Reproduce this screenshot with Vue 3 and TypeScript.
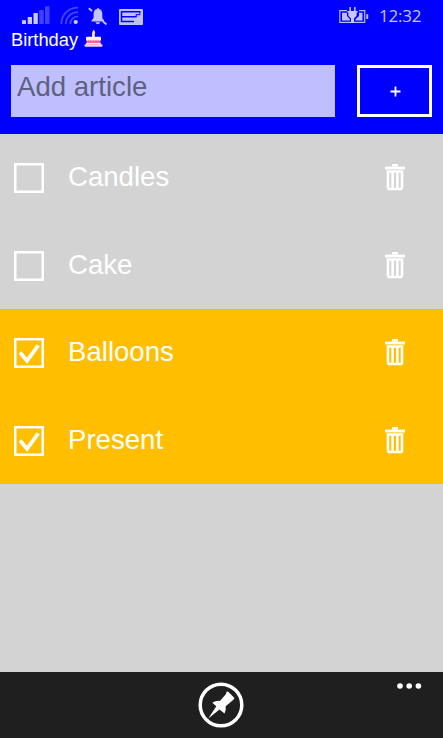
<script setup lang="ts">
import { ref } from 'vue'

interface Article {
  id: number
  name: string
  done: boolean
}

const articles = ref<Article[]>([
  { id: 1, name: 'Candles', done: false },
  { id: 2, name: 'Cake', done: false },
  { id: 3, name: 'Balloons', done: true },
  { id: 4, name: 'Present', done: true },
])
const draft = ref('')
let nextId = 5

function add(): void {
  const name = draft.value.trim()
  if (!name) return
  articles.value.push({ id: nextId++, name, done: false })
  draft.value = ''
}

function remove(id: number): void {
  articles.value = articles.value.filter((a) => a.id !== id)
}
</script>

<template>
  <div class="phone">
    <header class="header">
      <div class="status">
        <svg class="signal" width="30" height="20" viewBox="0 0 30 20">
          <g fill="#c8c8ff">
            <rect x="1" y="15.2" width="4" height="3.8" />
            <rect x="6.7" y="12" width="4.3" height="7" />
            <rect x="12.5" y="8" width="4.3" height="11" />
          </g>
          <g fill="#4040ff">
            <rect x="18.2" y="5" width="4.5" height="14" />
            <rect x="24" y="1.3" width="4.5" height="17.7" />
          </g>
        </svg>
        <svg class="wifi" width="20" height="20" viewBox="0 0 20 20">
          <g fill="none" stroke="#4848ff" stroke-width="1.7">
            <path d="M1.3 19C1.3 9.7 8.5 2.7 18 2.7" />
            <path d="M5.8 19C5.8 12.3 11 7.1 18 7.1" />
            <path d="M10.3 19C10.3 14.7 13.5 11.5 18 11.5" />
          </g>
          <circle cx="15.7" cy="17" r="2.1" fill="#d0d0ff" />
        </svg>
        <svg class="bell" width="20" height="20" viewBox="0 0 20 20">
          <path fill="#c4c4ff" d="M9 3q0-1 1-1t1 1q3.300.8 3.300 5v3.300q0 1.700 1.700 3v1.200H3.600v-1.200q2-1.300 2-3V8Q5.600 3.800 9 3zM7.500 16.300h4.600q-.5 2-2.300 2t-2.300-2z" />
          <path stroke="#c4c4ff" stroke-width="1.800" d="M.8 2.300l3.200 2.700M14.800 15.300l3.700 3.200" />
        </svg>
        <svg class="note" width="24" height="16" viewBox="0 0 24 16">
          <rect width="24" height="16" rx="1" fill="#c0c0ff" />
          <path stroke="#0000ff" stroke-width="1.500" fill="none" d="M2 2.800H21.500M2.500 2.800V13M2.500 7.700H17.500M2.500 12.600H15" />
          <path stroke="#2020ff" stroke-width="1.200" fill="none" d="M20.800 3V5.700H17.300V8" />
        </svg>
        <svg class="battery" width="30" height="18" viewBox="0 0 30 18">
          <g fill="none" stroke="#b8b8ff" stroke-width="1.200">
            <path d="M8 4.600H.8V16.400H12M20 4.600H25.700V16.400H15" />
          </g>
          <path fill="#bcbcff" d="M3 6.800H8V10l3 3.200v1.200H3zM23.500 6.800H20V10l-3.500 3.200v1.200h7zM27.300 8.300H29.200V13H27.300z" />
          <path fill="#c8c8ff" d="M10.400 1h1.500v4h3.200V1h1.500v4h2v1.500h-1v3.200l-2.600 2.700V17h-3v-4.600L9.400 9.700V6.500h-1V5h2z" />
        </svg>
        <span class="clock">12:32</span>
      </div>
      <h1 class="title">
        <span>Birthday</span>
        <svg width="20" height="20" viewBox="0 0 20 20">
          <rect x="0.500" y="15.300" width="18" height="2.500" rx="1" fill="#e8dad8" />
          <rect x="2.500" y="9" width="14" height="7" rx="1" fill="#ff5ca8" />
          <path d="M2 11V8.700q0-1 1-1h13q1 0 1 1v2.300q-1.500 1.500-2.500 0-1.300 1.500-2.500 0-1.300 1.600-2.500 0-1.300 1.600-2.500 0-1.300 1.500-2.500 0-1.500 1.500-2.500 0z" fill="#fff0e0" />
          <rect x="2.100" y="14" width="14.800" height="1.600" fill="#fff0e5" />
          <rect x="8.100" y="4" width="2.600" height="5" fill="#f8f8d8" />
          <path d="M9.700.700q2.500 2.800.800 4.600-1.400.8-2.300-.5-.7-1.700 1.500-4.100z" fill="#ffd860" />
        </svg>
      </h1>
      <form class="entry" @submit.prevent="add">
        <input v-model="draft" class="field" type="text" placeholder="Add article" />
        <button class="add" type="submit" aria-label="Add">
          <svg width="11" height="11" viewBox="0 0 11 11">
            <path d="M5.500.5v10M.5 5.500h10" stroke="#fff" stroke-width="1.800" />
          </svg>
        </button>
      </form>
    </header>

    <ul class="list">
      <li v-for="a in articles" :key="a.id" class="row" :class="{ done: a.done }">
        <button class="check" type="button" role="checkbox" :aria-checked="a.done" @click="a.done = !a.done">
          <svg width="30" height="30" viewBox="0 0 30 30" fill="none" stroke="#fff">
            <rect x="1.250" y="1.250" width="27.500" height="27.500" stroke-width="2.500" />
            <path v-if="a.done" d="M6 14.500L13 22.800L24.300 7.300" stroke-width="3.700" />
          </svg>
        </button>
        <span class="name">{{ a.name }}</span>
        <button class="trash" type="button" aria-label="Delete" @click="remove(a.id)">
          <svg width="20" height="27" viewBox="0 0 20 27" fill="none" stroke="#fff">
            <path d="M7 1.300H13" stroke-width="2.600" />
            <path d="M0 4H20" stroke-width="2.800" />
            <path d="M3 7.500H17V23.200q0 1.800-1.800 1.800H4.800Q3 25 3 23.200z" stroke-width="2.600" />
            <path d="M7.600 8V25M12.400 8V25" stroke-width="2.600" />
          </svg>
        </button>
      </li>
    </ul>

    <footer class="appbar">
      <button class="pin" type="button" aria-label="Pin">
        <svg width="46" height="46" viewBox="0 0 46 46">
          <circle cx="23" cy="23" r="20.800" fill="none" stroke="#fff" stroke-width="3.500" />
          <path fill="#fff" d="M28.500 9.800Q29.500 9 30.500 10L36 15.500Q36.800 16.500 35.800 17.300L34.500 18.500L27.700 24.300Q28.300 28.500 26.500 31.500L21.500 27.500L10.300 36.500L18.300 24.300L14.300 20.700Q18 18.500 21.900 18.900L28 12z" />
        </svg>
      </button>
      <button class="more" type="button" aria-label="More">
        <svg width="26" height="6" viewBox="0 0 26 6" fill="#fff">
          <circle cx="4" cy="3" r="2.800" />
          <circle cx="13.200" cy="3" r="2.800" />
          <circle cx="22.400" cy="3" r="2.800" />
        </svg>
      </button>
    </footer>
  </div>
</template>

<style>
body {
  margin: 0;
  overflow: hidden;
}
</style>

<style scoped>
.phone {
  display: flex;
  flex-direction: column;
  width: 443px;
  height: 738px;
  background: #d3d3d3;
  color: #fff;
  font-family: "Liberation Sans", Arial, sans-serif;
}
button {
  padding: 0;
  border: 0;
  background: none;
  color: inherit;
}
svg {
  display: block;
  flex: none;
}
.header {
  box-sizing: border-box;
  height: 134.400px;
  flex: none;
  background: #0000ff;
}
.status {
  display: flex;
  align-items: flex-start;
  height: 29px;
  padding: 0 21px;
}
.signal {
  margin-top: 5px;
}
.wifi {
  margin: 5px 0 0 9px;
}
.bell {
  margin: 6px 0 0 8px;
}
.note {
  margin: 8.500px 0 0 11px;
}
.battery {
  margin: 6px 0 0 196px;
}
.clock {
  margin: 5px 0 0 10px;
  font: 17px/22px "Open Sans", "Noto Sans", sans-serif;
  letter-spacing: -0.200px;
  color: #c4c4ff;
}
.title {
  display: flex;
  align-items: flex-start;
  gap: 6px;
  height: 36px;
  margin: 0;
  padding-left: 11px;
  font-size: 18.300px;
  font-weight: 400;
  line-height: 21px;
}
.entry {
  display: flex;
  justify-content: space-between;
  height: 51.500px;
  margin: 0;
  padding: 0 11px;
}
.field {
  box-sizing: border-box;
  width: 324px;
  height: 51.500px;
  padding: 0 6px 8px;
  border: 0;
  border-radius: 0;
  outline: 0;
  background: #bfbfff;
  color: #000;
  font: 27.600px "Liberation Sans", Arial, sans-serif;
}
.field::placeholder {
  color: #606080;
  opacity: 1;
}
.add {
  display: flex;
  align-items: center;
  justify-content: center;
  box-sizing: border-box;
  width: 75px;
  height: 51.500px;
  padding: 2px 0 0 1px;
  border: 3px solid #fff;
}
.list {
  flex: 1;
  margin: 0;
  padding: 0;
  list-style: none;
}
.row {
  display: flex;
  align-items: center;
  box-sizing: border-box;
  height: 87.500px;
  padding: 0 38px 0 14px;
}
.row.done {
  background: #ffbf00;
}
.name {
  flex: 1;
  padding: 0 0 2px 24px;
  font-size: 27.600px;
  line-height: 32px;
}
.trash {
  margin-bottom: 1px;
}
.appbar {
  display: grid;
  grid-template-columns: 1fr auto 1fr;
  align-items: start;
  height: 66.300px;
  flex: none;
  background: #1f1f1f;
}
.pin {
  grid-column: 2;
  margin: 10px 2px 0 0;
}
.more {
  justify-self: end;
  margin: 11px 21px 0 0;
}
</style>
